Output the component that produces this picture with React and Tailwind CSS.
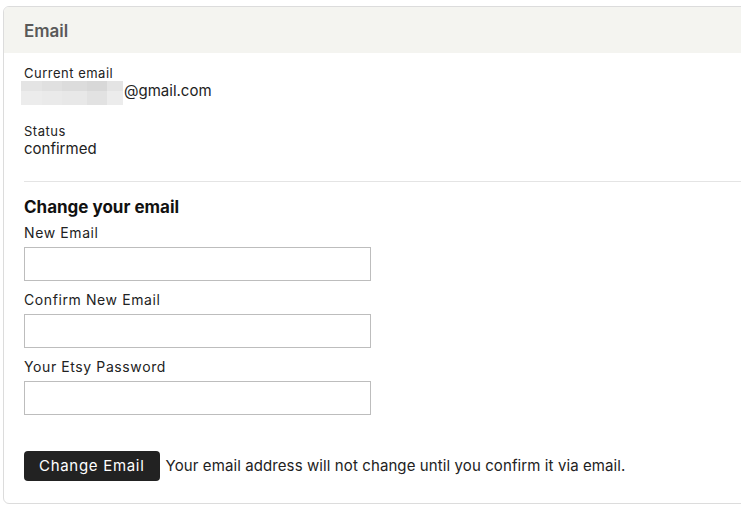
import React from 'react';

const mosaic = [
  ['#e4e4e4', '#e0e0e0', '#dcdcdc', '#d8d8d8', '#e4e4e4'],
  ['#ececec', '#eaeaea', '#e8e8e8', '#e2e2e2', '#ececec'],
];
const cols = [21, 20, 25, 20, 16];

const Field = ({ label, type = 'text' }) => (
  <div className="mt-[10px]">
    <label className="block text-[14px] leading-[18px] tracking-[0.6px] text-[#222]">{label}</label>
    <input
      type={type}
      className="block mt-[5px] w-[347px] h-[34px] border border-[#bdbdbd] bg-white outline-none"
    />
  </div>
);

export default function App() {
  return (
    <div className="w-[741px] h-[509px] bg-white pt-[6px] pl-[3px] overflow-hidden" style={{ fontFamily: 'Inter, "Noto Sans", sans-serif' }}>
      <div className="w-[760px] h-[498px] border border-[#dcdcdc] rounded-[6px] overflow-hidden">
        {/* Header */}
        <div className="h-[46px] bg-[#f4f4f0] flex items-center px-[20px] pt-[3px]">
          <h1 className="text-[17px] font-semibold text-[#595959]">Email</h1>
        </div>

        <div className="px-[20px]">
          <div className="pt-[12px] text-[#222]">
            <div className="text-[13px] leading-[16px] tracking-[0.5px]">Current email</div>
            <div className="flex items-center -ml-[3px]">
              <div className="flex flex-col">
                {mosaic.map((row, i) => (
                  <div key={i} className="flex">
                    {row.map((c, j) => (
                      <div key={j} style={{ background: c, width: cols[j], height: i === 0 ? 10 : 14 }} />
                    ))}
                  </div>
                ))}
              </div>
              <span className="text-[15px] leading-[20px] -mt-[5px] ml-[1px]">@gmail.com</span>
            </div>
          </div>

          <div className="pt-[18px] text-[#222]">
            <div className="text-[13px] leading-[16px] tracking-[0.5px]">Status</div>
            <div className="text-[15px] leading-[20px]">confirmed</div>
          </div>
        </div>

        <div className="ml-[20px] mt-[22px] border-t border-[#e4e4e4]" />

        <div className="px-[20px] pt-[14px]">
          <h2 className="text-[17px] leading-[22px] font-bold text-[#111]">Change your email</h2>
          <div className="-mt-[4px]">
            <Field label="New Email" />
            <Field label="Confirm New Email" />
            <Field label="Your Etsy Password" type="password" />
          </div>

          <div className="flex items-center mt-[36px]">
            <button className="h-[30px] px-[15px] bg-[#222] text-white text-[15px] tracking-[0.7px] rounded-[4px]">
              Change Email
            </button>
            <span className="ml-[6px] text-[15px] tracking-[0.1px] text-[#222]">
              Your email address will not change until you confirm it via email.
            </span>
          </div>
        </div>
      </div>
    </div>
  );
}
